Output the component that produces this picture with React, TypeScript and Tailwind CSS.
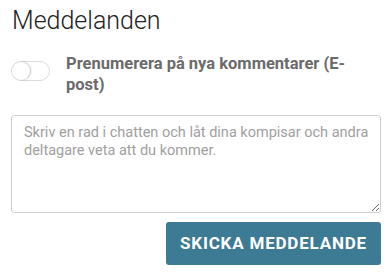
export default function App() {
  return (
    <div className="w-[392px] h-[275px] bg-white px-[11px] pt-[5px] font-['Roboto',sans-serif]">
      <h2 className="text-[25px] font-light leading-[32px] text-[#222] pl-px">Meddelanden</h2>

      {/* Subscribe toggle */}
      <div className="mt-[16px] flex items-start gap-[16px]">
        <button
          type="button"
          className="mt-[8px] w-[39px] h-[20px] shrink-0 rounded-full border border-[#dcdcdc] bg-white flex items-center"
        >
          <span className="w-[18px] h-[18px] rounded-full bg-white shadow-[1px_0_2px_rgba(0,0,0,0.25)]" />
        </button>
        <span className="text-[16.5px] font-bold leading-[21px] text-[#6b6b6b] pr-[20px]">
          Prenumerera på nya kommentarer (E-post)
        </span>
      </div>

      <textarea
        placeholder="Skriv en rad i chatten och låt dina kompisar och andra deltagare veta att du kommer."
        className="mt-[20px] block w-full h-[98px] rounded-[3px] border border-[#cfcfcf] pl-[12px] pr-[4px] pt-[8px] pb-[6px] text-[14.5px] leading-[18px] text-[#333] placeholder:text-[#a0a0a0] outline-none"
      />

      <div className="mt-[9px] flex justify-end">
        <button
          type="button"
          className="w-[215px] h-[43px] rounded-[3px] bg-[#3d7a93] text-white text-[17px] font-bold tracking-[0.8px] uppercase"
        >
          Skicka meddelande
        </button>
      </div>
    </div>
  );
}
